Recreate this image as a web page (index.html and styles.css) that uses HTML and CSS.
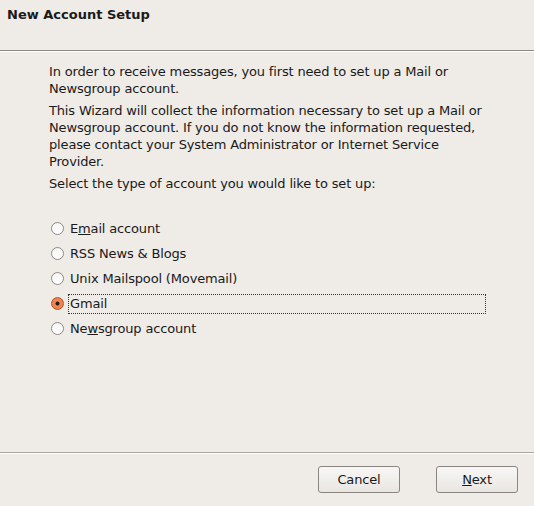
FILE: index.html
```html
<!DOCTYPE html>
<html>
<head>
<meta charset="utf-8">
<link rel="stylesheet" href="styles.css">
</head>
<body>
<div class="dialog">
  <div class="header"><h1 class="title">New Account Setup</h1></div>
  <div class="content">
    <p class="para">In order to receive messages, you first need to set up a Mail or Newsgroup account.</p>
    <p class="para">This Wizard will collect the information necessary to set up a Mail or Newsgroup account. If you do not know the information requested, please contact your System Administrator or Internet Service Provider.</p>
    <p class="para">Select the type of account you would like to set up:</p>
    <div class="options">
      <div class="option"><span class="radio"></span><span class="label">E<u>m</u>ail account</span></div>
      <div class="option"><span class="radio"></span><span class="label">RSS News &amp; Blogs</span></div>
      <div class="option"><span class="radio"></span><span class="label">Unix Mailspool (Movemail)</span></div>
      <div class="option"><span class="radio checked"></span><span class="label focused">Gmail</span></div>
      <div class="option"><span class="radio"></span><span class="label">Ne<u>w</u>sgroup account</span></div>
    </div>
  </div>
  <div class="footer">
    <button class="btn">Cancel</button>
    <button class="btn"><u>N</u>ext</button>
  </div>
</div>
</body>
</html>
```
FILE: styles.css
```css
html, body {
  margin: 0;
  padding: 0;
  background: #efebe7;
}
body {
  font-family: "DejaVu Sans", sans-serif;
  font-size: 13px;
  color: #1a1a1a;
}
.dialog {
  width: 534px;
  height: 506px;
  display: flex;
  flex-direction: column;
}
.header {
  border-bottom: 1px solid #8c8985;
  box-shadow: 0 1px 0 #ffffff;
  box-sizing: border-box;
  height: 51px;
}
.title {
  margin: 0;
  padding: 6px 0 0 7px;
  font-size: 13px;
  font-weight: bold;
  line-height: 17px;
}
.content {
  flex: 1;
  padding: 12px 40px 0 49px;
  letter-spacing: -0.16px;
}
.para {
  margin: 0 0 5px 0;
  line-height: 17px;
}
.options {
  margin-top: 24px;
  display: flex;
  flex-direction: column;
}
.option {
  height: 25px;
  display: flex;
  align-items: center;
  margin-left: 2px;
}
.radio {
  width: 11px;
  height: 11px;
  border: 1px solid #8e8a85;
  border-radius: 50%;
  background: linear-gradient(#f6f5f3, #ffffff);
  flex: none;
}
.radio.checked {
  border-color: #b8542a;
  background: radial-gradient(circle at 50% 50%, #2a1a10 0, #2a1a10 1.6px, #f08a5c 2.4px, #e8743f 100%);
}
.label {
  margin-left: 4px;
  line-height: 18px;
  padding: 0 1px;
  border: 1px dotted transparent;
}
.label.focused {
  border-color: #333;
  width: 414px;
}
.footer {
  height: 54px;
  border-top: 1px solid #a9a6a1;
  box-shadow: inset 0 1px 0 #ffffff;
  display: flex;
  justify-content: flex-end;
  align-items: flex-start;
  gap: 36px;
  padding: 13px 16px 0 0;
  box-sizing: border-box;
}
.btn {
  width: 82px;
  height: 27px;
  border: 1px solid #8a8580;
  border-radius: 3px;
  background: linear-gradient(#f8f7f5, #e9e6e2);
  font-family: "DejaVu Sans", sans-serif;
  font-size: 13px;
  letter-spacing: -0.16px;
  color: #1a1a1a;
  padding: 0;
}
```
